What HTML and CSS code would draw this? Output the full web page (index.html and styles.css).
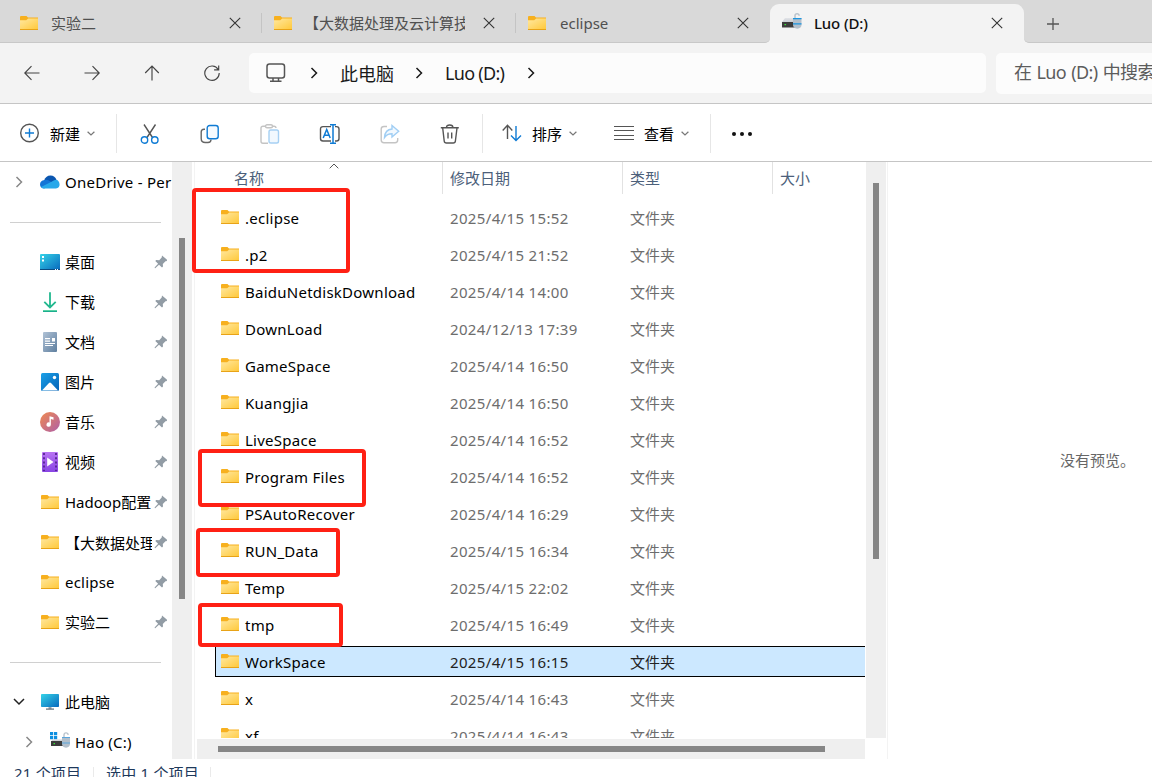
FILE: index.html
```html
<!DOCTYPE html>
<html lang="zh-CN">
<head>
<meta charset="UTF-8" />
<meta name="viewport" content="width=device-width, initial-scale=1.0"/>
<title>Luo (D:)</title>
<link rel="stylesheet" href="styles.css">
</head>
<body>

<svg class="sprite" width="0" height="0">
  <defs>
    <linearGradient id="gFolder" x1="0" y1="0" x2="1" y2="1"><stop offset="0" stop-color="#ffe8a0"/><stop offset="1" stop-color="#ffc93c"/></linearGradient>
    <linearGradient id="gBlue" x1="0" y1="0" x2="1" y2="1"><stop offset="0" stop-color="#35d3e8"/><stop offset="1" stop-color="#0869bd"/></linearGradient>
    <linearGradient id="gDown" x1="0" y1="0" x2="0" y2="1"><stop offset="0" stop-color="#36cf8d"/><stop offset="1" stop-color="#10a090"/></linearGradient>
    <linearGradient id="gDoc" x1="0" y1="0" x2="1" y2="1"><stop offset="0" stop-color="#b0c2d6"/><stop offset="1" stop-color="#5f7f9f"/></linearGradient>
    <linearGradient id="gPic" x1="0" y1="0" x2="1" y2="1"><stop offset="0" stop-color="#1ba1e8"/><stop offset="1" stop-color="#0562b6"/></linearGradient>
    <linearGradient id="gMusic" x1="0" y1="0" x2="1" y2="1"><stop offset="0" stop-color="#f08a50"/><stop offset="1" stop-color="#ae5fa8"/></linearGradient>
    <linearGradient id="gVideo" x1="0" y1="0" x2="0" y2="1"><stop offset="0" stop-color="#b873f3"/><stop offset="1" stop-color="#8845e4"/></linearGradient>
    <linearGradient id="gDrive" x1="0" y1="0" x2="0" y2="1"><stop offset="0" stop-color="#e2e4e8"/><stop offset="1" stop-color="#c9cdd3"/></linearGradient>
  </defs>
  <symbol id="folder" viewBox="0 0 18 14">
    <path d="M0 1q0-1 1-1h5.500l1.500 1.500H18V6H0z" fill="#f7b01e"/>
    <path d="M0 4.300h6.200l2-1.700H18V13H0z" fill="url(#gFolder)"/>
    <path d="M0 13h18v1H0z" fill="#e8a317"/>
  </symbol>
  <symbol id="close" viewBox="0 0 12 12"><path d="M.8.8l10.400 10.400M11.200.8L.8 11.200" fill="none" stroke="#333" stroke-width="1.100"/></symbol>
  <symbol id="drive" viewBox="0 0 20 16">
    <path d="M3 5h10l1 4H0z" fill="url(#gDrive)"/>
    <path d="M0 9h14v5.500H0z" fill="#3c3c3c"/>
    <path d="M2.500 11h1.600v1.200H2.500z" fill="#3be03b"/>
    <path d="M13 5V2.500Q13 .8 15 .8t2.200 2" fill="none" stroke="#b9c3cc" stroke-width="1.500"/>
    <path d="M11 5h8.500v7q0 3-4.200 3.800Q11 15 11 12z" fill="#b3bfcb"/>
    <path d="M11 5h8.500v1.200H11zM11 10.300h8.500v1.200H11z" fill="#1b95e0"/>
  </symbol>
  <symbol id="drive-win" viewBox="0 0 20 16">
    <path d="M0 0h3.200v3.200H0zM4 0h3.200v3.200H4zM0 4h3.200v3.200H0zM4 4h3.200v3.200H4z" fill="#0e8fe0"/>
    <path d="M2.500 7.400h10l1 2H1z" fill="#d0d3d8"/>
    <path d="M1 9h13v5H1z" fill="#3c3c3c"/>
    <path d="M3.500 11h1.500v1.200H3.500z" fill="#3be03b"/>
    <path d="M14 5V3Q14 .9 16 .9t2.200 2" fill="none" stroke="#b9c3cc" stroke-width="1.400"/>
    <path d="M12 5h8v7q0 3-4 3.800-4-.8-4-3.800z" fill="#b3bfcb"/>
    <path d="M12 5h8v.9h-8zM12 10.500h8v.9h-8z" fill="#5aa5dc"/>
  </symbol>
  <symbol id="pin" viewBox="0 0 14 14">
    <path d="M8 .6L12.800 4.600 13 6l-1.500.3-2.700 2.600.2 2.700-1 .9L5 9.700 1.200 13.200.6 13.100.8 12.200 4.100 8.800 1.300 6l.9-1 3 .2 2.500-2.800z" fill="#929ca5"/>
  </symbol>
  <symbol id="chev" viewBox="0 0 8 12"><path d="M1.500 1l5 5-5 5" fill="none" stroke="currentColor" stroke-width="1.500"/></symbol>
  <symbol id="chev-down" viewBox="0 0 8 5"><path d="M.6.7L4 4 7.400.7" fill="none" stroke="#777" stroke-width="1.200"/></symbol>
</svg>

<div class="tabs">
  <div class="tab">
    <svg class="folder"><use href="#folder"/></svg>
    <span class="tab-title">实验二</span>
    <svg class="close"><use href="#close"/></svg>
  </div>
  <div class="tab">
    <svg class="folder"><use href="#folder"/></svg>
    <span class="tab-title">【大数据处理及云计算技</span>
    <svg class="close"><use href="#close"/></svg>
  </div>
  <div class="tab last">
    <svg class="folder"><use href="#folder"/></svg>
    <span class="tab-title">eclipse</span>
    <svg class="close"><use href="#close"/></svg>
  </div>
  <div class="tab active">
    <svg class="drive"><use href="#drive"/></svg>
    <span class="tab-title">Luo (D:)</span>
    <svg class="close"><use href="#close"/></svg>
  </div>
  <div class="tabs-rest">
    <svg width="12" height="12" viewBox="0 0 12 12"><path d="M6 0v12M0 6h12" stroke="#555" stroke-width="1.300"/></svg>
  </div>
</div>

<div class="nav">
  <div class="nav-btn"><svg width="16" height="16" viewBox="0 0 16 16"><path d="M15.500 8H1M7.500 1.200L.8 8l6.700 6.800"/></svg></div>
  <div class="nav-btn"><svg width="16" height="16" viewBox="0 0 16 16"><path d="M.5 8H15M8.500 1.200L15.200 8l-6.700 6.800"/></svg></div>
  <div class="nav-btn"><svg width="16" height="16" viewBox="0 0 16 16"><path d="M8 15.500V1M1.200 8L8 1l6.800 7"/></svg></div>
  <div class="nav-btn"><svg width="16" height="16" viewBox="0 0 16 16"><path d="M14.200 4.500A7.200 7.200 0 1 0 15.200 8M14.700.6v4.200h-4.600"/></svg></div>
  <div class="address">
    <svg class="monitor" viewBox="0 0 20 20"><rect x="1" y="1" width="17.500" height="14" rx="2.500"/><path d="M7 15v2.500M12.500 15v2.500M4 18.300h11.500"/></svg>
    <svg class="chev"><use href="#chev"/></svg>
    <span class="crumb crumb-pc">此电脑</span>
    <svg class="chev"><use href="#chev"/></svg>
    <span class="crumb crumb-drive">Luo (D:)</span>
    <svg class="chev"><use href="#chev"/></svg>
  </div>
  <div class="search">在 Luo (D:) 中搜索</div>
</div>

<div class="toolbar">
  <div class="tool tool-new">
    <svg width="20" height="20" viewBox="0 0 20 20"><circle cx="9.500" cy="10" r="8.800" stroke="#555"/><path d="M9.500 5.500v9M5 10h9" stroke="#0f7bd4"/></svg>
    <span>新建</span>
    <svg class="chev-down"><use href="#chev-down"/></svg>
  </div>
  <div class="icons">
    <div class="icon"><svg width="20" height="20" viewBox="0 0 20 20"><path d="M4 .5l8.500 13M15.500.5L7 13.500" stroke="#555"/><circle cx="4.500" cy="16" r="3.200" stroke="#0f7bd4"/><circle cx="14.800" cy="16" r="3.200" stroke="#0f7bd4"/></svg></div>
    <div class="icon"><svg width="20" height="20" viewBox="0 0 20 20"><path d="M5 5.200H4Q1.200 5.200 1.200 8v6.500q0 4 4 4H8q3 0 3-3" stroke="#666"/><rect x="7.200" y="1.500" width="11" height="13.200" rx="2.500" fill="#f5faff" stroke="#0f7bd4"/></svg></div>
    <div class="icon"><svg width="20" height="20" viewBox="0 0 20 20"><path d="M6 2.200H3Q1 2.200 1 4.200v13q0 2 2 2h5M12 2.200h2q2 0 2 1.800" stroke="#c4c4c4"/><rect x="5.500" y=".8" width="7" height="3" rx="1.500" stroke="#c4c4c4"/><rect x="9" y="6" width="9.500" height="13" rx="1.800" fill="#f1f8fe" stroke="#a6d0f3"/></svg></div>
    <div class="icon"><svg width="22" height="20" viewBox="0 0 22 20"><path d="M12 2.600H4Q1.500 2.600 1.500 5v9.500q0 2.500 2.500 2.500h8M16 2.600h1.500q2.500 0 2.500 2.400v9.500q0 2.500-2.500 2.500H16" stroke="#555"/><path d="M4.200 14L7.700 5.500l3.500 8.500M5.500 11.300h4.500M14 .8v18.400M11 .7h6M11 19.300h6" stroke="#0f7bd4" stroke-width="1.500"/></svg></div>
    <div class="icon"><svg width="20" height="20" viewBox="0 0 20 20"><path d="M7 2.500H4Q1.200 2.500 1.200 5v11q0 2.700 2.800 2.700h11q2.700 0 2.700-2.700v-2" stroke="#c4c4c4"/><path d="M12 1.500l6.700 5.800L12 13V9.700q-5 0-7.500 3.800Q5 5.500 12 5z" stroke="#a0cef4" fill="#f1f8fe"/></svg></div>
    <div class="icon"><svg width="20" height="20" viewBox="0 0 20 20"><path d="M.8 3.800h18M6.500 3.500q0-2.500 3.200-2.500t3.200 2.500M2.700 4l1.500 13q.2 2 2.200 2h6.800q2 0 2.200-2L17 4M8 8.500v6M11.700 8.500v6" stroke="#555"/></svg></div>
  </div>
  <div class="tool tool-sort">
    <svg width="20" height="18" viewBox="0 0 20 18"><path d="M5.500 15V1.500M.7 6.500l4.800-5.200 4.800 5.200" stroke="#555"/><path d="M14 2v14.500M9 11.500l5 5 5-5" stroke="#0f7bd4"/></svg>
    <span>排序</span>
    <svg class="chev-down"><use href="#chev-down"/></svg>
  </div>
  <div class="tool tool-view">
    <svg width="20" height="14" viewBox="0 0 20 14"><path d="M0 .5h20M0 4.500h20M0 9.500h20M0 13.500h20" stroke="#555"/></svg>
    <span>查看</span>
    <svg class="chev-down"><use href="#chev-down"/></svg>
  </div>
  <div class="more"><i></i><i></i><i></i></div>
</div>

<div class="main">
  <div class="sidebar">
    <div class="side-row onedrive">
      <svg class="chev"><use href="#chev"/></svg>
      <svg class="side-icon" viewBox="0 0 20 20"><path d="M4 9Q5.500 3.500 10.500 3.500 15 3.500 16.500 8L10 13z" fill="#0a56b0"/><path d="M4.500 8q3-1 6 1.500l4 3L4 16.500Q0 16 0 12.500 0 8.500 4.500 8z" fill="#1374d6"/><path d="M12 9.500q5-3.500 7 .5 2 5.500-3 6.500H4q-2 0-3-1.500z" fill="#28a8ea"/></svg>
      <span>OneDrive - Per</span>
    </div>
    <div class="side-line"></div>
    <div class="side-row cjk">
      <svg class="side-icon" viewBox="0 0 20 20"><rect x="0" y="2" width="20" height="16" rx="1" fill="url(#gBlue)"/><path d="M0 17h20v1H0z" fill="#0a4a80"/><path d="M2 4h2v2H2zM2 7.500h2v2H2zM15 17h1v1h-1zM17 17h1v1h-1z" fill="#fff"/></svg>
      <span>桌面</span><svg class="pin"><use href="#pin"/></svg>
    </div>
    <div class="side-row cjk">
      <svg class="side-icon" viewBox="0 0 20 20"><path d="M10 .3v15M4.300 9.800l5.700 5.700 5.700-5.700" fill="none" stroke="#22b88f" stroke-width="1.800"/><path d="M3 18.200h14V20H3z" fill="url(#gDown)"/></svg>
      <span>下载</span><svg class="pin"><use href="#pin"/></svg>
    </div>
    <div class="side-row cjk">
      <svg class="side-icon" viewBox="0 0 20 20"><rect x="3" y="0" width="14" height="20" rx="1" fill="url(#gDoc)"/><path d="M5 6h5v1.200H5zM5 8.500h5v1.200H5zM12 6h3v3.500h-3zM5 11h10v1.100H5zM5 13h8v1.100H5z" fill="#fff"/></svg>
      <span>文档</span><svg class="pin"><use href="#pin"/></svg>
    </div>
    <div class="side-row cjk">
      <svg class="side-icon" viewBox="0 0 20 20"><rect x="1" y="1" width="18" height="18" rx="1.500" fill="url(#gPic)"/><path d="M2 18.500l7-7.500q1-1 2 0l7 7.500z" fill="#fff"/><circle cx="14.500" cy="5.500" r="1.700" fill="#fff"/></svg>
      <span>图片</span><svg class="pin"><use href="#pin"/></svg>
    </div>
    <div class="side-row cjk">
      <svg class="side-icon" viewBox="0 0 20 20"><circle cx="10" cy="10" r="10" fill="url(#gMusic)"/><path d="M9.500 4.300l4 1v2.500l-2.600-.8v5.500a2.200 2.200 0 1 1-1.400-2z" fill="#fff"/></svg>
      <span>音乐</span><svg class="pin"><use href="#pin"/></svg>
    </div>
    <div class="side-row cjk">
      <svg class="side-icon" viewBox="0 0 20 20"><rect x="2" y="0" width="16" height="20" rx="1" fill="url(#gVideo)"/><path d="M4 1v18M16 1v18" stroke="#4b1d86" stroke-width="1.600" stroke-dasharray="2 2.200"/><path d="M7.200 5.500v9l6.300-4.500z" fill="#fff"/></svg>
      <span>视频</span><svg class="pin"><use href="#pin"/></svg>
    </div>
    <div class="side-row cjk">
      <svg class="folder"><use href="#folder"/></svg>
      <span>Hadoop配置</span><svg class="pin"><use href="#pin"/></svg>
    </div>
    <div class="side-row">
      <svg class="folder"><use href="#folder"/></svg>
      <span class="long">【大数据处理</span><svg class="pin"><use href="#pin"/></svg>
    </div>
    <div class="side-row">
      <svg class="folder"><use href="#folder"/></svg>
      <span>eclipse</span><svg class="pin"><use href="#pin"/></svg>
    </div>
    <div class="side-row cjk">
      <svg class="folder"><use href="#folder"/></svg>
      <span>实验二</span><svg class="pin"><use href="#pin"/></svg>
    </div>
    <div class="side-line"></div>
    <div class="side-row cjk thispc">
      <svg class="open" viewBox="0 0 12 8"><path d="M1 1l5 5 5-5" fill="none" stroke="#222" stroke-width="1.500"/></svg>
      <svg class="side-icon" viewBox="0 0 20 20"><rect x="1" y="2" width="18" height="13" rx=".8" fill="url(#gBlue)"/><path d="M8.500 15h3v2h-3z" fill="#9aa5ae"/><path d="M6 16.500h8v1.200H6z" fill="#5d6a75"/></svg>
      <span>此电脑</span>
    </div>
    <div class="side-row hao">
      <svg class="chev"><use href="#chev"/></svg>
      <svg class="drive"><use href="#drive-win"/></svg>
      <span>Hao (C:)</span>
    </div>
  </div>
  <div class="vbar side-bar"><div class="thumb"></div></div>

  <div class="content">
    <div class="list">
      <div class="list-head">
        <div class="col-name">名称<svg class="sort-mark" viewBox="0 0 10 6"><path d="M.7 5.300L5 1l4.300 4.300" fill="none" stroke="#555"/></svg></div>
        <div class="col-date">修改日期</div>
        <div class="col-type">类型</div>
        <div class="col-size">大小</div>
      </div>
      <div class="rows">
        <div class="row"><svg class="folder"><use href="#folder"/></svg><b>.eclipse</b><span class="date">2025/4/15 15:52</span><span>文件夹</span></div>
        <div class="row"><svg class="folder"><use href="#folder"/></svg><b>.p2</b><span class="date">2025/4/15 21:52</span><span>文件夹</span></div>
        <div class="row"><svg class="folder"><use href="#folder"/></svg><b>BaiduNetdiskDownload</b><span class="date">2025/4/14 14:00</span><span>文件夹</span></div>
        <div class="row"><svg class="folder"><use href="#folder"/></svg><b>DownLoad</b><span class="date">2024/12/13 17:39</span><span>文件夹</span></div>
        <div class="row"><svg class="folder"><use href="#folder"/></svg><b>GameSpace</b><span class="date">2025/4/14 16:50</span><span>文件夹</span></div>
        <div class="row"><svg class="folder"><use href="#folder"/></svg><b>Kuangjia</b><span class="date">2025/4/14 16:50</span><span>文件夹</span></div>
        <div class="row"><svg class="folder"><use href="#folder"/></svg><b>LiveSpace</b><span class="date">2025/4/14 16:52</span><span>文件夹</span></div>
        <div class="row"><svg class="folder"><use href="#folder"/></svg><b>Program Files</b><span class="date">2025/4/14 16:52</span><span>文件夹</span></div>
        <div class="row"><svg class="folder"><use href="#folder"/></svg><b>PSAutoRecover</b><span class="date">2025/4/14 16:29</span><span>文件夹</span></div>
        <div class="row"><svg class="folder"><use href="#folder"/></svg><b>RUN_Data</b><span class="date">2025/4/15 16:34</span><span>文件夹</span></div>
        <div class="row"><svg class="folder"><use href="#folder"/></svg><b>Temp</b><span class="date">2025/4/15 22:02</span><span>文件夹</span></div>
        <div class="row"><svg class="folder"><use href="#folder"/></svg><b>tmp</b><span class="date">2025/4/15 16:49</span><span>文件夹</span></div>
        <div class="row selected"><svg class="folder"><use href="#folder"/></svg><b>WorkSpace</b><span class="date">2025/4/15 16:15</span><span>文件夹</span></div>
        <div class="row"><svg class="folder"><use href="#folder"/></svg><b>x</b><span class="date">2025/4/14 16:43</span><span>文件夹</span></div>
        <div class="row"><svg class="folder"><use href="#folder"/></svg><b>xf</b><span class="date">2025/4/14 16:43</span><span>文件夹</span></div>
      </div>
      <div class="hbar"><div class="thumb"></div></div>
    </div>
    <div class="vbar list-bar"><div class="thumb"></div></div>
  </div>

  <div class="preview">没有预览。</div>
</div>

<div class="status">
  <span class="count">21 个项目</span>
  <span class="picked">选中 1 个项目</span>
</div>

<!-- red marks over the list -->
<div class="mark mark-eclipse"></div>
<div class="mark mark-program"></div>
<div class="mark mark-run"></div>
<div class="mark mark-tmp"></div>

</body>
</html>
```
FILE: styles.css
```css
* {
  box-sizing: border-box;
}

body {
  font-family: "Noto Sans", "Noto Sans CJK SC", sans-serif;
  font-size: 15px;
  background: #fff;
  color: #000;
  margin: 0;
  height: 777px;
  overflow: hidden;
  display: flex;
  flex-direction: column;
  position: relative;
  white-space: nowrap;
}

svg {
  flex: none;
  display: block;
}

.sprite {
  position: absolute;
}

.folder {
  width: 18px;
  height: 14px;
}

.close {
  width: 12px;
  height: 12px;
}

.drive {
  width: 20px;
  height: 16px;
}

.chev {
  width: 8px;
  height: 12px;
}

.chev-down {
  width: 8px;
  height: 5px;
}

/* tabs */
.tabs {
  height: 43px;
  flex: none;
  display: flex;
  background: #f3f3f3;
}

.tab {
  width: 254px;
  height: 43px;
  flex: none;
  display: flex;
  align-items: center;
  padding: 3px 21px 0 12px;
  background: #d9d9d9;
  border-bottom: 1px solid #c8c8c8;
  color: #505050;
  position: relative;
}

.tab:first-child {
  width: 262px;
  padding-left: 20px;
}

.tab:not(.last):not(.active)::after {
  content: "";
  position: absolute;
  right: 0;
  top: 13px;
  width: 1px;
  height: 20px;
  background: #c4c4c4;
}

.tab-title {
  flex: 1;
  margin: 0 14px 0 13px;
  overflow: hidden;
  line-height: 24px;
}

.tab.last {
  border-bottom-right-radius: 5px;
}

.tab:nth-child(2) .tab-title {
  margin-left: 12px;
  margin-right: 18px;
}

.tab.last .tab-title {
  margin-left: 14px;
}

.tab.active {
  background: #f3f3f3;
  border: none;
  color: #111;
  font-weight: 500;
  z-index: 1;
}

.tab.active::before {
  content: "";
  position: absolute;
  inset: 0 0 7px;
  background: #d9d9d9;
  z-index: -2;
}

.tab.active::after {
  content: "";
  position: absolute;
  inset: 4px 0 0;
  background: #f3f3f3;
  border-radius: 9px 9px 0 0;
  z-index: -1;
}

.tab.active .drive {
  margin-top: -4px;
}

.tab.active .close {
  margin-top: -1px;
}

.tab.active .tab-title {
  margin-left: 12px;
  letter-spacing: -0.15px;
}

.tabs-rest {
  flex: 1;
  background: #d9d9d9;
  border-bottom: 1px solid #c8c8c8;
  border-bottom-left-radius: 5px;
  padding: 18px 0 0 23px;
}

/* navigation */
.nav {
  height: 61px;
  flex: none;
  display: flex;
  background: #f3f3f3;
  border-bottom: 1px solid #c5c5c5;
  padding: 10px 0 0 1px;
}

.nav-btn {
  width: 60px;
  height: 40px;
  display: flex;
  align-items: center;
  justify-content: center;
  padding-left: 1px;
  fill: none;
  stroke: #444;
  stroke-width: 1.15;
}

.address {
  width: 737px;
  height: 40px;
  margin-left: 8px;
  background: #fcfcfc;
  border-radius: 5px;
  display: flex;
  align-items: center;
  padding-left: 17px;
  color: #1a1a1a;
}

.monitor {
  width: 20px;
  height: 20px;
  fill: none;
  stroke: #555;
  stroke-width: 1.5;
}

.address .monitor + .chev {
  margin-left: 24px;
}

.crumb,
.search {
  font-size: 18px;
}

.crumb {
  margin-top: -1px;
}

.crumb-pc {
  width: 54px;
  margin-left: 22px;
  margin-right: 21px;
}

.crumb-drive {
  width: 60px;
  margin-left: 22px;
  margin-right: 22px;
  letter-spacing: -0.7px;
}

.search {
  flex: 1;
  height: 41px;
  line-height: 39px;
  margin-left: 10px;
  padding-left: 18px;
  background: #fcfcfc;
  border-radius: 5px 0 0 5px;
  color: #5c5c5c;
  overflow: hidden;
  letter-spacing: -0.6px;
  word-spacing: 1px;
}

/* toolbar */
.toolbar {
  height: 58px;
  flex: none;
  display: flex;
  align-items: center;
  border-bottom: 1px solid #c5c5c5;
  padding-top: 1px;
}

.toolbar svg {
  fill: none;
  stroke-width: 1.4;
}

.tool {
  display: flex;
  align-items: center;
}

.tool span {
  width: 31px;
  margin: 0 6px 0 10px;
}

.tool-new {
  width: 117px;
  height: 39px;
  padding-left: 20px;
  border-right: 1px solid #e6e6e6;
}

.icons {
  display: flex;
  width: 366px;
  height: 39px;
  padding-left: 2px;
  border-right: 1px solid #e6e6e6;
}

.icon {
  width: 60px;
  display: flex;
  align-items: center;
  justify-content: center;
  padding-top: 1px;
  padding-left: 1px;
}

.tool-sort {
  width: 131px;
  padding-left: 19px;
}

.tool-view {
  width: 97px;
  height: 39px;
  border-right: 1px solid #e6e6e6;
}

.tool-view svg:first-child {
  stroke-width: 1;
}

.more {
  display: flex;
  gap: 4px;
  padding: 2px 0 0 21px;
}

.more i {
  width: 4px;
  height: 4px;
  border-radius: 50%;
  background: #111;
}

/* body */
.main {
  height: 597px;
  flex: none;
  display: flex;
}

.sidebar {
  width: 172px;
  overflow: hidden;
}

.side-row {
  height: 40px;
  display: flex;
  align-items: center;
  padding-left: 40px;
  padding-right: 4px;
}

.side-row span {
  flex: 1;
  margin-left: 5px;
  margin-right: 2px;
  overflow: hidden;
  letter-spacing: 0.2px;
}

.side-row.cjk span {
  margin-top: -2px;
  letter-spacing: 0;
}

.side-row span.long {
  letter-spacing: 0;
}

.side-row > .folder {
  margin: 0 1px;
}

.side-icon {
  width: 20px;
  height: 20px;
}

.pin {
  width: 14px;
  height: 14px;
}

.side-row .chev {
  color: #888;
}

.side-row.onedrive {
  padding-left: 15px;
  padding-right: 0;
}

.side-row.onedrive span {
  margin-right: 0;
  letter-spacing: 0.25px;
}

.onedrive .side-icon {
  margin-left: 17px;
}

.side-line {
  height: 40px;
  padding: 20px 11px 0 10px;
}

.side-line::before {
  content: "";
  display: block;
  height: 1px;
  background: #d0d0d0;
}

.side-row.thispc {
  padding-left: 13px;
}

.open {
  width: 12px;
  height: 8px;
  margin-right: 15px;
}

.side-row.hao {
  padding-left: 25px;
}

.hao .drive {
  margin-left: 17px;
  margin-top: -4px;
}

.vbar {
  width: 20px;
  flex: none;
  background: #efefef;
}

.vbar .thumb {
  width: 6px;
  margin-left: 7px;
  background: #868686;
}

.side-bar .thumb {
  height: 361px;
  margin-top: 76px;
}

.content {
  width: 694px;
  display: flex;
  margin-left: 2px;
  border-left: 1px solid #f3f3f3;
  border-right: 1px solid #f3f3f3;
}

.list {
  width: 671px;
  flex: none;
  display: flex;
  flex-direction: column;
  padding-left: 2px;
}

.list-bar {
  height: 576px;
}

.list-bar .thumb {
  height: 376px;
  margin-top: 21px;
}

.list-head {
  height: 40px;
  flex: none;
  display: flex;
  color: #4c607a;
}

.list-head div {
  height: 32px;
  line-height: 32px;
  padding-left: 7px;
}

.list-head .col-name {
  width: 246px;
  padding-left: 37px;
  border-right: 1px solid #e2e2e2;
  position: relative;
}

.sort-mark {
  position: absolute;
  left: 132px;
  top: 1px;
  width: 10px;
  height: 6px;
}

.col-date {
  width: 180px;
  border-right: 1px solid #e2e2e2;
}

.col-type {
  width: 150px;
  border-right: 1px solid #e2e2e2;
}

.rows {
  height: 536px;
  overflow: hidden;
  padding-left: 18px;
}

.row {
  height: 31px;
  width: 650px;
  margin-bottom: 6px;
  display: flex;
  align-items: center;
  border: 1px solid transparent;
  border-right: none;
  padding-left: 5px;
  color: #6d6d6d;
}

.row .folder {
  margin-top: -1px;
}

.row b {
  width: 205px;
  margin-left: 6px;
  font-weight: normal;
  letter-spacing: 0.25px;
  color: #000;
}

.row span {
  margin-top: -1px;
}

.row .date {
  width: 180px;
  margin-top: 0;
  letter-spacing: 0.35px;
}

.row.selected {
  background: #cce8ff;
  border-color: #000;
  color: #222;
}

.hbar {
  width: 668px;
  height: 20px;
  margin-top: 1px;
  padding: 7px 0 0 21px;
  background: #efefef;
}

.hbar .thumb {
  width: 607px;
  height: 6px;
  background: #868686;
}

.preview {
  flex: 1;
  padding-left: 172px;
  line-height: 597px;
  color: #666;
}

.status {
  height: 18px;
  overflow: hidden;
  display: flex;
  color: #1e395b;
  line-height: 12px;
  padding: 8px 0 0 14px;
  letter-spacing: 0.2px;
}

.status .count {
  width: 80px;
  border-right: 1px solid #eaeaea;
}

.status .picked {
  width: 117px;
  padding-left: 12px;
  border-right: 1px solid #eaeaea;
}

/* marks */
.mark {
  position: absolute;
  border: 4px solid #ff2014;
  border-radius: 4px;
}

.mark-eclipse {
  left: 192px;
  top: 188px;
  width: 158px;
  height: 85px;
}

.mark-program {
  left: 198px;
  top: 449px;
  width: 168px;
  height: 58px;
}

.mark-run {
  left: 196px;
  top: 528px;
  width: 144px;
  height: 49px;
}

.mark-tmp {
  left: 198px;
  top: 603px;
  width: 145px;
  height: 44px;
}
```
